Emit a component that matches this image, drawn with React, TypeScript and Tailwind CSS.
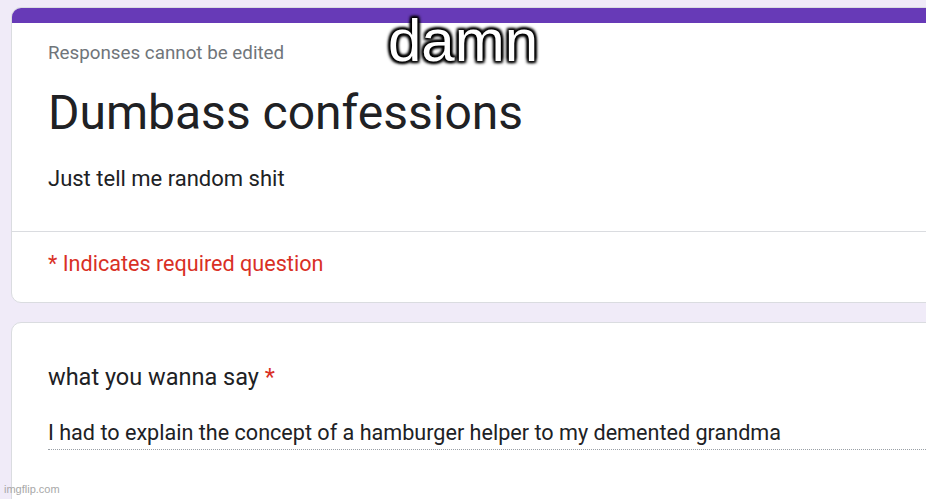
import React from 'react';

export default function App() {
    return (
        <div className="relative w-[926px] h-[499px] overflow-hidden bg-[#f0ebf8]" style={{ fontFamily: 'Roboto, "Noto Sans", sans-serif' }}>
            <div className="pt-[7px] pl-[11px]">
                {/* ── Header card ── */}
                <div className="w-[960px] bg-white rounded-[10px] border border-[#dadce0] overflow-hidden">
                    <div className="h-[15px] bg-[#673ab7]" />
                    <div className="pl-[36px] pt-[17px]">
                        <p className="text-[18.8px] leading-[26px] text-[#70757a]">Responses cannot be edited</p>
                        <h1 className="mt-[19px] text-[48px] leading-[56px] text-[#202124]">Dumbass confessions</h1>
                        <p className="mt-[24px] text-[22px] leading-[28px] text-[#202124]">Just tell me random shit</p>
                    </div>
                    <div className="mt-[38px] border-t border-[#dadce0] pl-[36px] pt-[18px] pb-[24px]">
                        <p className="text-[21.6px] leading-[28px] text-[#d93025]">* Indicates required question</p>
                    </div>
                </div>

                {/* ── Question card ── */}
                <div className="mt-[19px] w-[960px] h-[220px] bg-white rounded-[10px] border border-[#dadce0] pl-[36px] pt-[39px]">
                    <p className="text-[23.5px] leading-[30px] text-[#202124]">
                        what you wanna say <span className="text-[#d93025]">*</span>
                    </p>
                    <p className="mt-[27px] pb-[2px] text-[21.6px] leading-[28px] text-[#202124] border-b border-dotted border-[#9aa0a6]">
                        I had to explain the concept of a hamburger helper to my demented grandma
                    </p>
                </div>
            </div>

            {/* ── Meme caption ── */}
            <div
                className="absolute top-[7px] left-[388px] text-[60px] leading-[68px] text-white"
                style={{
                    fontFamily: '"Liberation Sans", Arial, sans-serif',
                    textShadow: '0 0 3px #000, 0 0 3px #000, 2px 2px 3px #000, -2px -2px 3px #000, 2px -2px 3px #000, -2px 2px 3px #000',
                }}
            >
                damn
            </div>

            <div className="absolute left-[4px] bottom-[3px] text-[11px] leading-[14px] text-[#a8a8a8]" style={{ fontFamily: '"Liberation Sans", Arial, sans-serif' }}>
                imgflip.com
            </div>
        </div>
    );
}
